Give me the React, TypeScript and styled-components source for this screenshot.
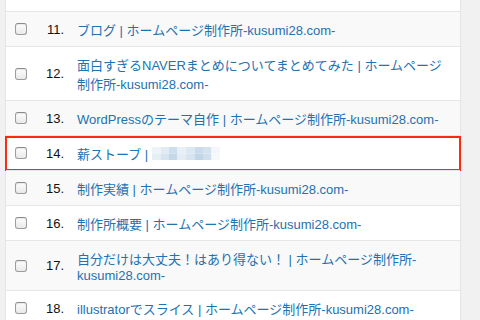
import React from 'react'
import styled, { createGlobalStyle } from 'styled-components'

const GlobalStyle = createGlobalStyle`
	html, body {
		margin: 0;
		padding: 0;
		background: #f1f1f1;
		overflow: hidden;
	}
	body {
		font-family: 'Liberation Sans', 'Noto Sans CJK JP', sans-serif;
		font-size: 13px;
		color: #222;
	}
`

type Post = { no: number; title: string; masked?: boolean; highlight?: boolean }

const posts: Post[] = [
	{ no: 11, title: 'ブログ | ホームページ制作所-kusumi28.com-' },
	{ no: 12, title: '面白すぎるNAVERまとめについてまとめてみた | ホームページ制作所-kusumi28.com-' },
	{ no: 13, title: 'WordPressのテーマ自作 | ホームページ制作所-kusumi28.com-' },
	{ no: 14, title: '薪ストーブ | ', masked: true, highlight: true },
	{ no: 15, title: '制作実績 | ホームページ制作所-kusumi28.com-' },
	{ no: 16, title: '制作所概要 | ホームページ制作所-kusumi28.com-' },
	{ no: 17, title: '自分だけは大丈夫！はあり得ない！ | ホームページ制作所-kusumi28.com-' },
	{ no: 18, title: 'illustratorでスライス | ホームページ制作所-kusumi28.com-' },
]

// pixelated blur over the site name
const mosaic = [
	['#eef3f8', '#e2ebf4', '#cddeee', '#e8eff6', '#dbe7f2', '#c9dbec', '#d3e2ef', '#f3f7fb'],
	['#e6eef6', '#d7e4f0', '#c4d8ea', '#e4ecf5', '#d6e4f0', '#c2d6e9', '#cfdfee', '#f6f9fc'],
]

const Mosaic = () => (
	<MosaicSvg width={68} height={13} viewBox="0 0 68 13">
		{mosaic.map((row, r) =>
			row.map((c, i) => <rect key={`${r}-${i}`} x={i * 8.5} y={r * 6.5} width={8.5} height={6.5} fill={c} />)
		)}
	</MosaicSvg>
)

export default function App() {
	return (
		<>
			<GlobalStyle />
			<Page>
				<Table>
					<Row $alt={false} $first />
					{posts.map((p, i) => (
						<Row key={p.no} $alt={i % 2 === 0} $highlight={p.highlight}>
							<CheckCell>
								<Check />
							</CheckCell>
							<NumCell>{p.no}.</NumCell>
							<TitleCell>
								<TitleLink href="#">{p.title}</TitleLink>
								{p.masked && <Mosaic />}
							</TitleCell>
						</Row>
					))}
				</Table>
			</Page>
		</>
	)
}

const Page = styled.div`
	display: flex;
	padding: 0 19px 0 5px;
	min-height: 320px;
`

const Table = styled.div`
	width: 456px;
	box-sizing: border-box;
	background: #fff;
	border-left: 1px solid #e5e5e5;
	border-right: 1px solid #e5e5e5;
`

const Row = styled.div<{ $alt: boolean; $first?: boolean; $highlight?: boolean }>`
	position: relative;
	display: flex;
	align-items: center;
	background: ${(p) => (p.$alt ? '#f9f9f9' : '#fff')};
	border-top: ${(p) => (p.$first ? 'none' : '1px solid #e6e6e6')};
	height: ${(p) => (p.$first ? '11px' : 'auto')};
	${(p) =>
		p.$highlight &&
		`
		&::after {
			content: '';
			position: absolute;
			top: 0;
			left: -1px;
			right: -1px;
			height: 35px;
			box-sizing: border-box;
			border: 2px solid #fb2a10;
		}
	`}
`

const CheckCell = styled.div`
	width: 28px;
	padding-left: 9px;
	display: flex;
	align-items: center;
`

const Check = styled.span`
	display: block;
	width: 12px;
	height: 12px;
	box-sizing: border-box;
	border: 1px solid #9d9d9d;
	border-top-color: #8a8a8a;
	border-radius: 3px;
	background: linear-gradient(#fdfdfd, #e9e9e9);
	box-shadow: inset 0 1px 1px rgba(0, 0, 0, 0.08);
`

const NumCell = styled.div`
	width: 21px;
	text-align: right;
	color: #111;
	line-height: 15px;
`

const TitleCell = styled.div`
	width: 373px;
	margin-left: 13px;
	padding: 8px 0 7px;
	display: flex;
	align-items: center;
	flex-wrap: wrap;
`

const TitleLink = styled.a`
	color: #2271b1;
	text-decoration: none;
	white-space: pre-wrap;
	flex: 0 1 auto;
	max-width: 100%;
`

const MosaicSvg = styled.svg`
	display: block;
	flex: none;
`
